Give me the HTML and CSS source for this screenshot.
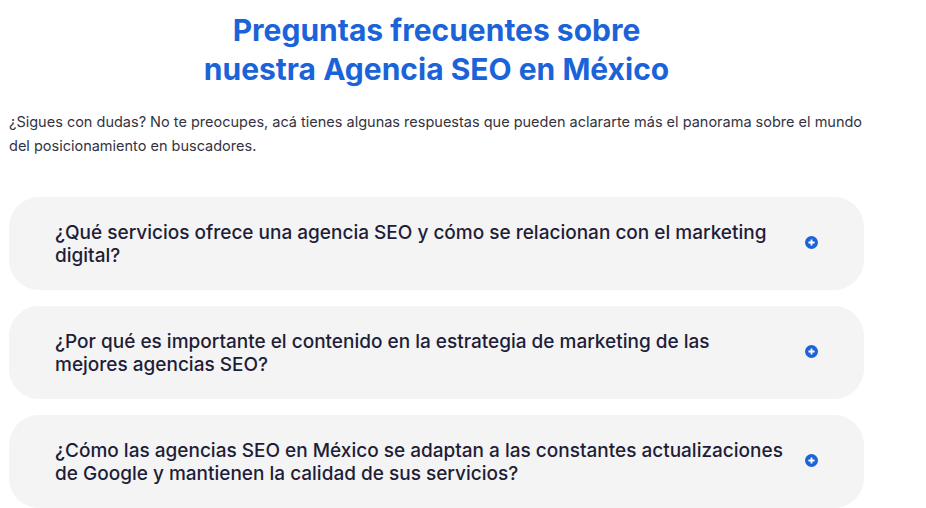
FILE: index.html
```html
<!DOCTYPE html>
<html lang="es">
<head>
    <meta charset="UTF-8">
    <meta name="viewport" content="width=device-width, initial-scale=1.0">
    <title>Preguntas frecuentes - Agencia SEO en México</title>
    <link rel="stylesheet" href="styles.css">
</head>
<body>
    <section class="faq">
        <h2 class="faq-title">Preguntas frecuentes sobre<br>nuestra Agencia SEO en México</h2>
        <p class="faq-intro">¿Sigues con dudas? No te preocupes, acá tienes algunas respuestas que pueden aclararte más el panorama sobre el mundo del posicionamiento en buscadores.</p>

        <div class="faq-list">
            <div class="faq-item">
                <h3 class="faq-question">¿Qué servicios ofrece una agencia SEO y cómo se relacionan con el marketing digital?</h3>
                <svg class="faq-icon" viewBox="0 0 16 16"><circle cx="8" cy="8" r="8"/><path d="M8 4.2v7.6M4.2 8h7.6"/></svg>
            </div>
            <div class="faq-item">
                <h3 class="faq-question">¿Por qué es importante el contenido en la estrategia de marketing de las mejores&nbsp;agencias SEO?</h3>
                <svg class="faq-icon" viewBox="0 0 16 16"><circle cx="8" cy="8" r="8"/><path d="M8 4.2v7.6M4.2 8h7.6"/></svg>
            </div>
            <div class="faq-item">
                <h3 class="faq-question">¿Cómo las agencias SEO en México se adaptan a las constantes actualizaciones de Google y mantienen la calidad de sus servicios?</h3>
                <svg class="faq-icon" viewBox="0 0 16 16"><circle cx="8" cy="8" r="8"/><path d="M8 4.2v7.6M4.2 8h7.6"/></svg>
            </div>
        </div>
    </section>
</body>
</html>
```

FILE: styles.css
```css
body {
    font-family: Inter, "Noto Sans", sans-serif;
    margin: 0;
    padding: 0;
    background-color: #fff;
    color: #2b2b3a;
}
.faq {
    width: 855px;
    padding: 11px 0 0 9px;
}
.faq-title {
    font-size: 30px;
    font-weight: 700;
    line-height: 39px;
    color: #1a63d8;
    text-align: center;
    margin: 0 0 21px;
}
.faq-intro {
    font-size: 14.5px;
    line-height: 24px;
    color: #33333f;
    margin: 0 0 39px;
}
.faq-list {
    display: flex;
    flex-direction: column;
    gap: 16px;
}
.faq-item {
    background-color: #f4f4f4;
    border-radius: 30px;
    height: 93px;
    box-sizing: border-box;
    padding: 0 46px;
    display: flex;
    align-items: center;
    gap: 14px;
}
.faq-question {
    flex: 1;
    margin: 0;
    font-size: 19px;
    font-weight: 500;
    line-height: 23px;
    color: #1f1d38;
}
.faq-icon {
    width: 13px;
    height: 13px;
    flex-shrink: 0;
    margin-bottom: 3px;
}
.faq-icon circle {
    fill: #1a63d8;
}
.faq-icon path {
    stroke: #fff;
    stroke-width: 2.2;
    fill: none;
}
```
